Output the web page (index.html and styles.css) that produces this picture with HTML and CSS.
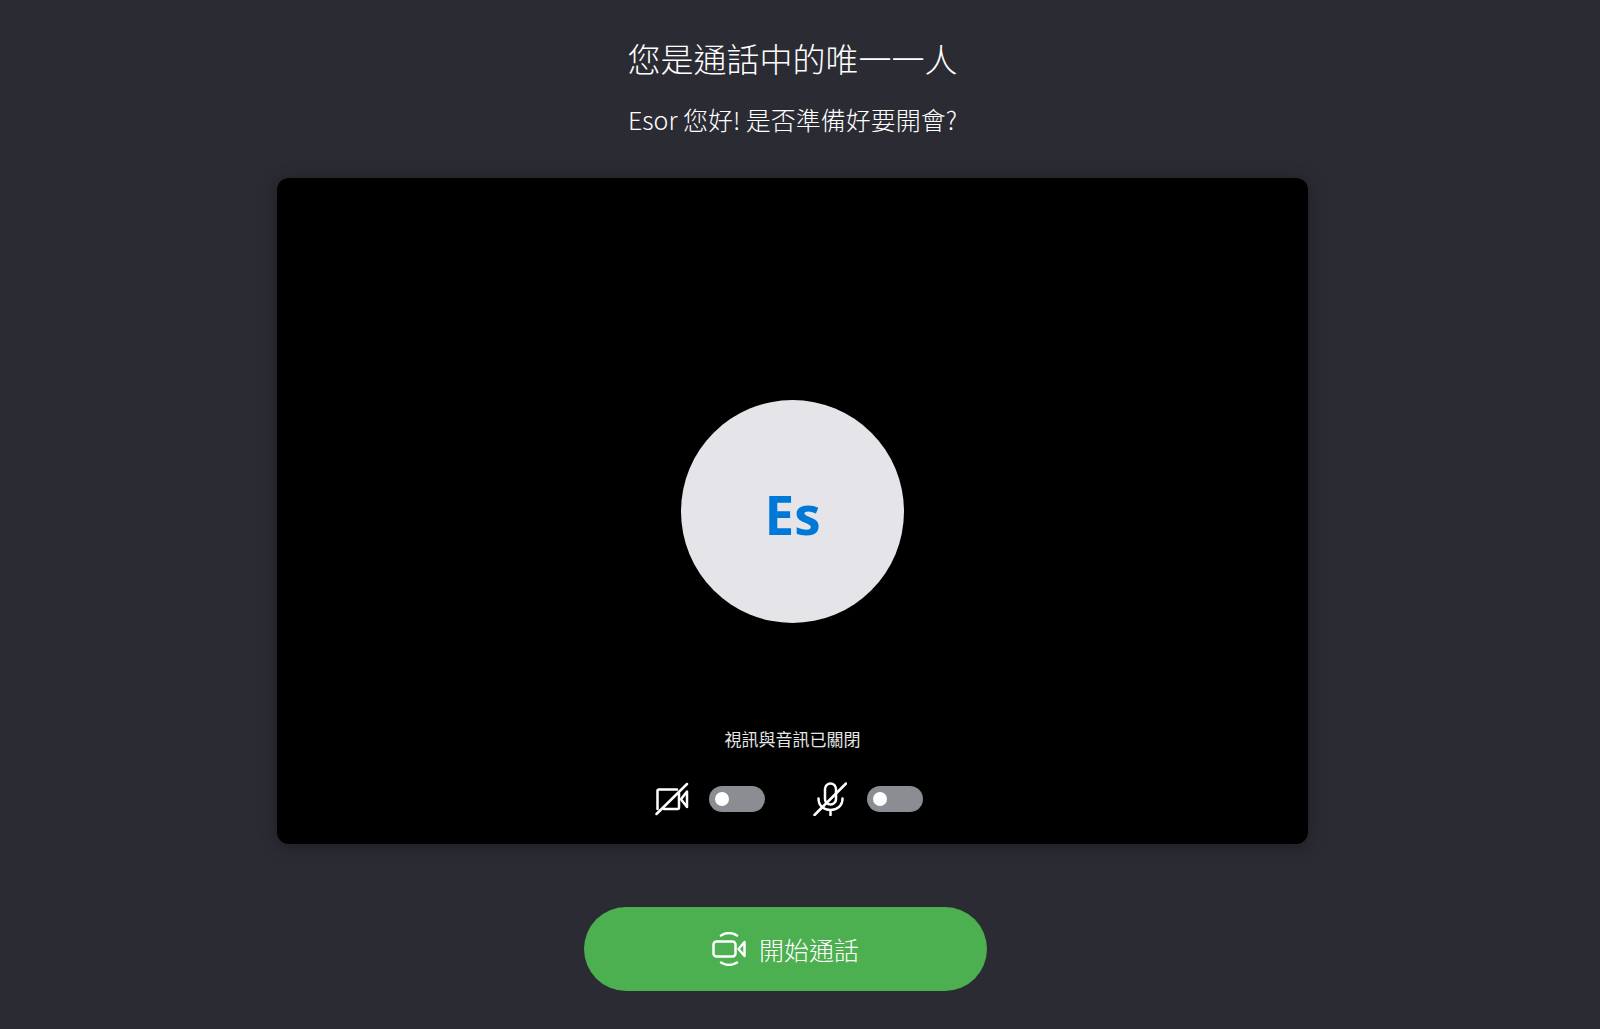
FILE: index.html
```html
<!DOCTYPE html>
<html lang="zh-Hant">
<head>
  <meta charset="UTF-8">
  <meta name="viewport" content="width=device-width, initial-scale=1.0">
  <title>開始通話</title>
  <link rel="stylesheet" href="styles.css">
</head>
<body>
  <header>
    <h1>您是通話中的唯一一人</h1>
    <p>Esor 您好! 是否準備好要開會?</p>
  </header>

  <main>
    <div class="preview">
      <div class="avatar">Es</div>
      <div class="preview-footer">
        <p class="status">視訊與音訊已關閉</p>
        <div class="controls">
          <label class="control">
            <svg class="icon" viewBox="0 0 34 34" aria-hidden="true">
              <path d="M2.500 27V9q0-1.500 1.500-1.500H22M24 11v14.500q0 1.500-1.500 1.500H9"/>
              <path d="M32 9.500v15.500l-6-7.700z"/>
              <path d="M1.500 32L32 2"/>
            </svg>
            <input type="checkbox" class="switch" aria-label="視訊">
          </label>
          <label class="control">
            <svg class="icon" viewBox="0 0 34 34" aria-hidden="true">
              <rect x="12" y="1.500" width="11" height="21" rx="5.500"/>
              <path d="M5.500 16.500c0 7 5 11.500 12 11.500s12-4.500 12-11.500M17.500 28v5"/>
              <path d="M1.500 33L33 1.500"/>
            </svg>
            <input type="checkbox" class="switch" aria-label="音訊">
          </label>
        </div>
      </div>
    </div>

    <button id="start-button" class="start-button">
      <svg class="icon" viewBox="0 0 34 34" aria-hidden="true">
        <rect x="1.500" y="9.500" width="22" height="15" rx="3"/>
        <path d="M32.500 10v14l-6-7z"/>
        <path d="M9 3.500c5-3 11-3 16 0M9 30.500c5 3 11 3 16 0"/>
      </svg>
      開始通話
    </button>
  </main>
</body>
</html>
```

FILE: styles.css
```css
* {
  box-sizing: border-box;
}

body {
  font-family: "Noto Sans CJK TC", "Open Sans", sans-serif;
  margin: 0;
  padding: 34px 15px 36px 0;
  background-color: #2b2b33;
  color: white;
}

header {
  text-align: center;
}

h1 {
  margin: 0;
  font-size: 33px;
  line-height: 48px;
  font-weight: 300;
}

header p {
  margin: 19px 0 0;
  font-size: 25px;
  line-height: 36px;
  font-weight: 300;
}

main {
  display: flex;
  flex-direction: column;
  align-items: center;
  margin-top: 41px;
}

.preview {
  display: grid;
  grid-template-rows: 1fr auto 1fr;
  justify-items: center;
  width: 65%;
  min-height: 666px;
  padding: 28px;
  background-color: #000000;
  border-radius: 12px;
  box-shadow: 0 2px 16px rgba(0, 0, 0, 0.35);
}

.avatar {
  grid-row: 2;
  width: 223px;
  height: 223px;
  border-radius: 50%;
  background-color: #e4e4e9;
  color: #0078d7;
  font-family: "Open Sans", sans-serif;
  font-size: 53px;
  line-height: 230px;
  font-weight: bold;
  text-align: center;
}

.preview-footer {
  grid-row: 3;
  align-self: end;
}

.status {
  margin: 0 0 31px;
  font-size: 17px;
  line-height: 24px;
  text-align: center;
  color: #e6e6e6;
}

.controls {
  display: flex;
  gap: 48px;
  margin-right: 8px;
}

.control {
  display: flex;
  align-items: center;
  gap: 20px;
}

.icon {
  width: 34px;
  height: 34px;
  fill: none;
  stroke: white;
  stroke-width: 2.5;
  stroke-linecap: round;
  stroke-linejoin: round;
}

.switch {
  appearance: none;
  display: flex;
  align-items: center;
  width: 56px;
  height: 26px;
  margin: 0;
  padding: 0 6px;
  border-radius: 13px;
  background-color: #8a8d91;
  cursor: pointer;
}

.switch::before {
  content: "";
  width: 14px;
  height: 14px;
  border-radius: 50%;
  background-color: white;
}

.switch:checked {
  justify-content: flex-end;
  background-color: #4caf50;
}

.start-button {
  display: flex;
  justify-content: center;
  align-items: center;
  gap: 13px;
  width: 403px;
  height: 84px;
  margin: 63px 14px 0 0;
  border: none;
  border-radius: 42px;
  background-color: #4caf50;
  color: white;
  font-family: inherit;
  font-size: 25px;
  font-weight: 300;
  cursor: pointer;
}

.start-button:hover {
  background-color: #449d48;
}
```
